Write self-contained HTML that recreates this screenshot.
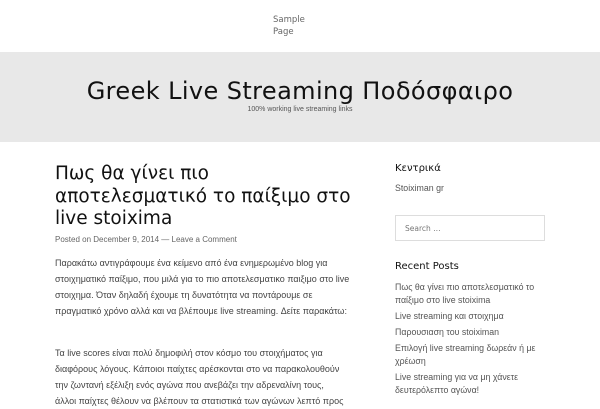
<!DOCTYPE html>
<html><head><meta charset="utf-8"><style>
*{margin:0;padding:0;box-sizing:border-box}
body{width:600px;height:400px;overflow:hidden;background:#fff;font-family:"DejaVu Sans","Liberation Sans",sans-serif;color:#333;position:relative}
.a{position:absolute;white-space:nowrap}
.nav{left:273px;top:14px;font-size:8.5px;color:#666;line-height:12px}
.hdr{position:absolute;left:0;top:52px;width:600px;height:90px;background:#e8e8e8}
.title{left:0;width:600px;text-align:center;top:77px;font-size:24px;color:#111;letter-spacing:0.4px}
.tag{left:0;width:600px;text-align:center;top:106px;font-size:7px;color:#555;font-family:"Liberation Sans",sans-serif}
.pt{left:55px;top:163px;font-size:18.5px;line-height:22.5px;color:#111}
.meta{left:55px;top:235px;font-size:8px;color:#666;font-family:"Liberation Sans",sans-serif}
.p{left:55px;font-size:9px;line-height:16px;color:#444;font-family:"Liberation Sans",sans-serif}
.sh{left:395px;font-size:10px;color:#111}
.sl{left:395px;font-size:8.8px;line-height:13px;color:#555;font-family:"Liberation Sans",sans-serif}
.search{position:absolute;left:395px;top:215px;width:150px;height:26px;border:1px solid #ddd;font-size:7.5px;color:#777;padding:8px 0 0 9px}
</style></head><body>
<div class="a nav">Sample<br>Page</div>
<div class="hdr"></div>
<div class="a title">Greek Live Streaming Ποδόσφαιρο</div>
<div class="a tag">100% working live streaming links</div>
<div class="a pt">Πως θα γίνει πιο<br>αποτελεσματικό το παίξιμο στο<br>live stoixima</div>
<div class="a meta">Posted on December 9, 2014 — Leave a Comment</div>
<div class="a p" style="top:255px">Παρακάτω αντιγράφουμε ένα κείμενο από ένα ενημερωμένο blog  για<br>στοιχηματικό παίξιμο, που μιλά για το πιο αποτελεσματικο παιξιμο στο live<br>στοιχημα. Όταν δηλαδή έχουμε τη δυνατότητα να ποντάρουμε σε<br>πραγματικό χρόνο αλλά και να βλέπουμε live streaming. Δείτε παρακάτω:</div>
<div class="a p" style="top:345px">Τα live scores είναι πολύ δημοφιλή στον κόσμο του στοιχήματος για<br>διαφόρους λόγους. Κάποιοι παίχτες αρέσκονται στο να παρακολουθούν<br>την ζωντανή εξέλιξη ενός αγώνα που ανεβάζει την αδρεναλίνη τους,<br>άλλοι παίχτες θέλουν να βλέπουν τα στατιστικά των αγώνων λεπτό προς</div>
<div class="a sh" style="top:163px">Κεντρικά</div>
<div class="a sl" style="top:182px">Stoiximan gr</div>
<div class="search">Search …</div>
<div class="a sh" style="top:261px">Recent Posts</div>
<div class="a sl" style="top:281px">Πως θα γίνει πιο αποτελεσματικό το<br>παίξιμο στο live stoixima</div>
<div class="a sl" style="top:310px">Live streaming και στοιχημα</div>
<div class="a sl" style="top:326px">Παρουσιαση του stoiximan</div>
<div class="a sl" style="top:342px">Επιλογή live streaming δωρεάν ή με<br>χρέωση</div>
<div class="a sl" style="top:371px">Live streaming για να μη χάνετε<br>δευτερόλεπτο αγώνα!</div>
</body></html>
